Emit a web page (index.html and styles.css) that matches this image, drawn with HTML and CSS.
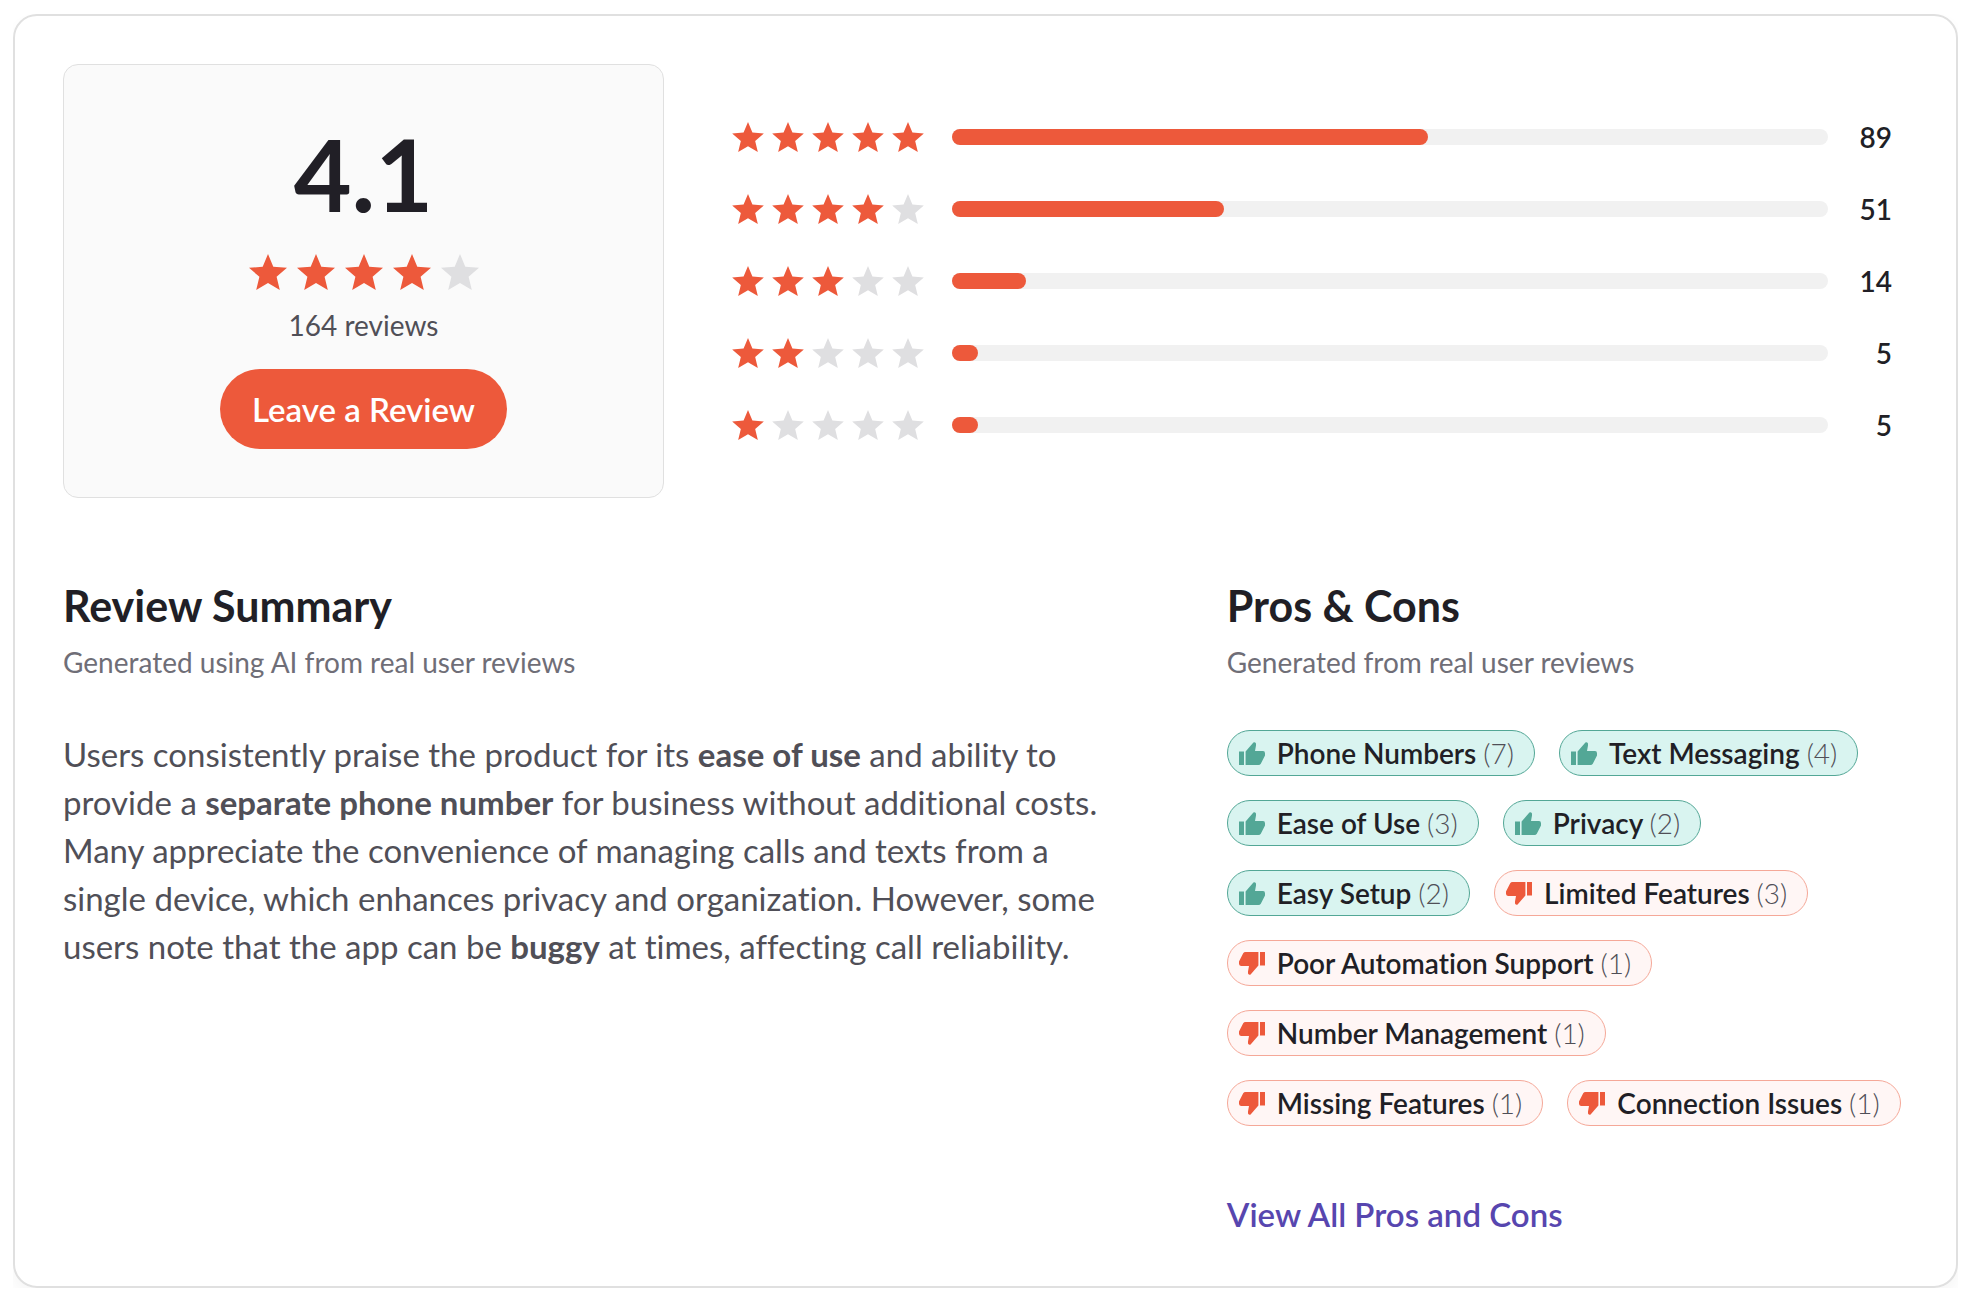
FILE: index.html
```
<!DOCTYPE html>
<html lang="en">
	<head>
		<meta charset="utf-8">
		<title>Reviews</title>
		<meta name="viewport" content="width=device-width, initial-scale=1.0">
		<link rel="stylesheet" href="styles.css">
	</head>
	<body>
		<svg class="sprite" aria-hidden="true">
			<symbol id="star" viewBox="0 0 38 36">
				<path d="M19 0L24.3 12.7L38 13.8L27.6 22.8L30.8 36L19 29L7.2 36L10.4 22.8L0 13.8L13.7 12.7Z"/>
			</symbol>
			<symbol id="thumb" viewBox="0 0 26 23">
				<path d="M0 9.5H5V23H0ZM6.6 9.5L14.4 .6Q15.9 -.3 17 1.5V3.6L16 9.1H24Q26 9.1 26 11.2V13.4L21.8 21.8Q21 23 19.5 23H6.6Z"/>
			</symbol>
		</svg>

		<main class="card">
			<section class="overview">
				<div class="score">
					<div class="score-value">4.1</div>
					<div class="stars stars-large" role="img" aria-label="4 out of 5 stars">
						<svg><use href="#star"/></svg><svg><use href="#star"/></svg><svg><use href="#star"/></svg><svg><use href="#star"/></svg><svg class="off"><use href="#star"/></svg>
					</div>
					<div class="score-total">164 reviews</div>
					<button type="button" class="leave-review">Leave a Review</button>
				</div>

				<div class="breakdown">
					<div class="row">
						<div class="stars" role="img" aria-label="5 stars">
							<svg><use href="#star"/></svg><svg><use href="#star"/></svg><svg><use href="#star"/></svg><svg><use href="#star"/></svg><svg><use href="#star"/></svg>
						</div>
						<div class="bar"><div class="fill" style="width: 54.3%"></div></div>
						<div class="count">89</div>
					</div>
					<div class="row">
						<div class="stars" role="img" aria-label="4 stars">
							<svg><use href="#star"/></svg><svg><use href="#star"/></svg><svg><use href="#star"/></svg><svg><use href="#star"/></svg><svg class="off"><use href="#star"/></svg>
						</div>
						<div class="bar"><div class="fill" style="width: 31.1%"></div></div>
						<div class="count">51</div>
					</div>
					<div class="row">
						<div class="stars" role="img" aria-label="3 stars">
							<svg><use href="#star"/></svg><svg><use href="#star"/></svg><svg><use href="#star"/></svg><svg class="off"><use href="#star"/></svg><svg class="off"><use href="#star"/></svg>
						</div>
						<div class="bar"><div class="fill" style="width: 8.5%"></div></div>
						<div class="count">14</div>
					</div>
					<div class="row">
						<div class="stars" role="img" aria-label="2 stars">
							<svg><use href="#star"/></svg><svg><use href="#star"/></svg><svg class="off"><use href="#star"/></svg><svg class="off"><use href="#star"/></svg><svg class="off"><use href="#star"/></svg>
						</div>
						<div class="bar"><div class="fill" style="width: 3%"></div></div>
						<div class="count">5</div>
					</div>
					<div class="row">
						<div class="stars" role="img" aria-label="1 star">
							<svg><use href="#star"/></svg><svg class="off"><use href="#star"/></svg><svg class="off"><use href="#star"/></svg><svg class="off"><use href="#star"/></svg><svg class="off"><use href="#star"/></svg>
						</div>
						<div class="bar"><div class="fill" style="width: 3%"></div></div>
						<div class="count">5</div>
					</div>
				</div>
			</section>

			<div class="details">
				<section>
					<h2>Review Summary</h2>
					<p class="subtitle">Generated using AI from real user reviews</p>
					<p class="summary">Users consistently praise the product for its <b>ease of use</b> and ability to provide a <b>separate phone number</b> for business without additional costs. Many appreciate the convenience of managing calls and texts from a single device, which enhances privacy and organization. However, some users note that the app can be <b>buggy</b> at times, affecting call reliability.</p>
				</section>

				<section>
					<h2>Pros &amp; Cons</h2>
					<p class="subtitle">Generated from real user reviews</p>
					<ul class="tags">
						<li class="tag pro"><svg><use href="#thumb"/></svg><span>Phone Numbers <small>(7)</small></span></li>
						<li class="tag pro"><svg><use href="#thumb"/></svg><span>Text Messaging <small>(4)</small></span></li>
						<li class="tag pro"><svg><use href="#thumb"/></svg><span>Ease of Use <small>(3)</small></span></li>
						<li class="tag pro"><svg><use href="#thumb"/></svg><span>Privacy <small>(2)</small></span></li>
						<li class="tag pro"><svg><use href="#thumb"/></svg><span>Easy Setup <small>(2)</small></span></li>
						<li class="tag con"><svg><use href="#thumb"/></svg><span>Limited Features <small>(3)</small></span></li>
						<li class="tag con"><svg><use href="#thumb"/></svg><span>Poor Automation Support <small>(1)</small></span></li>
						<li class="tag con"><svg><use href="#thumb"/></svg><span>Number Management <small>(1)</small></span></li>
						<li class="tag con"><svg><use href="#thumb"/></svg><span>Missing Features <small>(1)</small></span></li>
						<li class="tag con"><svg><use href="#thumb"/></svg><span>Connection Issues <small>(1)</small></span></li>
					</ul>
					<a class="view-all" href="#">View All Pros and Cons</a>
				</section>
			</div>
		</main>
	</body>
</html>
```
FILE: styles.css
```
* {
	box-sizing: border-box;
}
body {
	margin: 14px 18px 14px 13px;
	font-family: Lato, sans-serif;
	font-size: 28px;
	line-height: 40px;
	font-variant-ligatures: none;
	color: #211f26;
	background-color: #fff;
}
h2, p, ul {
	margin: 0;
	padding: 0;
}
.sprite {
	display: none;
}

.card {
	padding: 48px;
	border: 2px solid #e0e0e0;
	border-radius: 24px;
	box-shadow: 0 8px 16px rgba(0, 0, 0, 0.04);
}

.overview {
	display: grid;
	grid-template-columns: 1fr 2fr;
	gap: 42px;
}
.score {
	display: flex;
	flex-direction: column;
	align-items: center;
	padding: 48px;
	border: 1px solid #e0e0e0;
	border-radius: 15px;
	background-color: #fafafa;
}
.score-value {
	margin-bottom: 21px;
	font-size: 100px;
	font-weight: 700;
	line-height: 120px;
}
.score-total {
	margin: 15px 0 24px;
	color: #504f57;
}
.leave-review {
	height: 80px;
	padding: 0 32px;
	border: 0;
	border-radius: 40px;
	font-family: inherit;
	font-size: 33px;
	font-weight: 600;
	color: #fff;
	background-color: #ed593b;
	cursor: pointer;
}

.stars {
	display: flex;
	gap: 8px;
	fill: #ed593b;
}
.stars svg {
	width: 32px;
	height: 30px;
}
.stars-large {
	gap: 10px;
}
.stars-large svg {
	width: 38px;
	height: 36px;
}
.stars .off {
	fill: #dfdfe1;
}

.breakdown {
	display: flex;
	flex-direction: column;
	justify-content: center;
	gap: 32px;
	padding: 0 16px 0 26px;
}
.row {
	display: flex;
	align-items: center;
}
.bar {
	flex: 1;
	height: 16px;
	margin-left: 28px;
	border-radius: 8px;
	background-color: #f1f1f1;
}
.fill {
	height: 100%;
	border-radius: 8px;
	background-color: #ed593b;
}
.count {
	width: 64px;
	text-align: right;
	font-weight: 600;
}

.details {
	display: grid;
	grid-template-columns: 14fr 9fr;
	gap: 104px;
	margin-top: 82px;
}
h2 {
	font-size: 43px;
	font-weight: 700;
	line-height: 52px;
}
.subtitle {
	margin-top: 10px;
	color: #6f6e77;
}
.summary {
	margin-top: 48px;
	font-size: 33px;
	line-height: 48px;
	color: #504f57;
}
.tags {
	display: flex;
	flex-wrap: wrap;
	gap: 24px;
	margin-top: 48px;
	list-style: none;
}
.tag {
	display: flex;
	align-items: center;
	gap: 12px;
	height: 46px;
	padding: 0 20px 0 11px;
	border: 1px solid;
	border-radius: 23px;
	font-weight: 600;
}
.tag span {
	color: #211f26;
}
.tag small {
	font-size: 28px;
	font-weight: 300;
	color: #504f57;
}
.tag svg {
	width: 26px;
	height: 23px;
}
.pro {
	border-color: #53a796;
	background-color: #d9f4f0;
	fill: #53a796;
}
.con {
	border-color: #f5a898;
	background-color: #fff6f5;
	fill: #ed593b;
}
.con svg {
	transform: rotate(180deg);
}
.view-all {
	display: inline-block;
	margin-top: 64px;
	font-size: 33px;
	font-weight: 600;
	line-height: 48px;
	color: #5746af;
	text-decoration: none;
}
```
